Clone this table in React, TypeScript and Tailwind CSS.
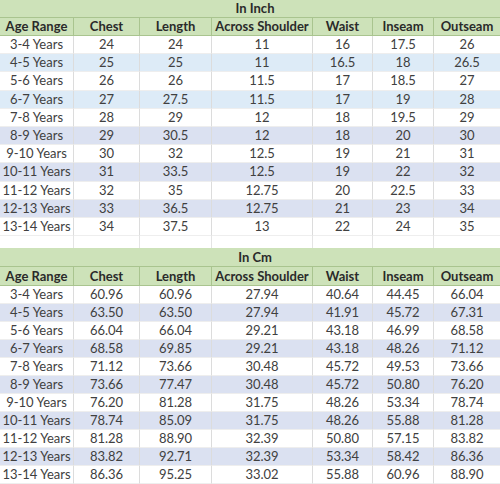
import React from "react";

const headers = ["Age Range", "Chest", "Length", "Across Shoulder", "Waist", "Inseam", "Outseam"];

const ages = [
  "3-4 Years",
  "4-5 Years",
  "5-6 Years",
  "6-7 Years",
  "7-8 Years",
  "8-9 Years",
  "9-10 Years",
  "10-11 Years",
  "11-12 Years",
  "12-13 Years",
  "13-14 Years",
];

const inchRows = [
  ["24", "24", "11", "16", "17.5", "26"],
  ["25", "25", "11", "16.5", "18", "26.5"],
  ["26", "26", "11.5", "17", "18.5", "27"],
  ["27", "27.5", "11.5", "17", "19", "28"],
  ["28", "29", "12", "18", "19.5", "29"],
  ["29", "30.5", "12", "18", "20", "30"],
  ["30", "32", "12.5", "19", "21", "31"],
  ["31", "33.5", "12.5", "19", "22", "32"],
  ["32", "35", "12.75", "20", "22.5", "33"],
  ["33", "36.5", "12.75", "21", "23", "34"],
  ["34", "37.5", "13", "22", "24", "35"],
];

const cmRows = [
  ["60.96", "60.96", "27.94", "40.64", "44.45", "66.04"],
  ["63.50", "63.50", "27.94", "41.91", "45.72", "67.31"],
  ["66.04", "66.04", "29.21", "43.18", "46.99", "68.58"],
  ["68.58", "69.85", "29.21", "43.18", "48.26", "71.12"],
  ["71.12", "73.66", "30.48", "45.72", "49.53", "73.66"],
  ["73.66", "77.47", "30.48", "45.72", "50.80", "76.20"],
  ["76.20", "81.28", "31.75", "48.26", "53.34", "78.74"],
  ["78.74", "85.09", "31.75", "48.26", "55.88", "81.28"],
  ["81.28", "88.90", "32.39", "50.80", "57.15", "83.82"],
  ["83.82", "92.71", "32.39", "53.34", "58.42", "86.36"],
  ["86.36", "95.25", "33.02", "55.88", "60.96", "88.90"],
];

const cols = "grid grid-cols-[74px_66px_72px_101px_60px_61px_66px]";

// stripe colour per row index (inch table mixes blue and lavender)
const inchStripe = ["", "bg-[#ddebf7]", "", "bg-[#ddebf7]", "", "bg-[#dbe1f1]", "", "bg-[#dbe1f1]", "", "bg-[#dbe1f1]", ""];
const cmStripe = ["", "bg-[#dbe1f1]", "", "bg-[#dbe1f1]", "", "bg-[#dbe1f1]", "", "bg-[#dbe1f1]", "", "bg-[#dbe1f1]", ""];

function SizeTable({
  title,
  rows,
  stripes,
  headH,
  rowH,
}: {
  title: string;
  rows: string[][];
  stripes: string[];
  headH: string;
  rowH: string;
}) {
  return (
    <div>
      {/* Title */}
      <div className={`flex ${headH} items-center justify-center border-b border-[#a9c48f] bg-[#cde2b9] pl-[10px] font-bold text-[#2a2a2a]`}>
        {title}
      </div>

      {/* Header */}
      <div className={`${cols} ${headH} bg-[#cde2b9] font-bold text-[#2a2a2a]`}>
        {headers.map((h, i) => (
          <div
            key={h}
            className={`flex items-center justify-center border-b border-[#a9c48f] ${i < 6 ? "border-r" : ""}`}
          >
            {h}
          </div>
        ))}
      </div>

      {/* Rows */}
      {rows.map((r, idx) => (
        <div key={ages[idx]} className={`${cols} ${rowH} text-[#404040] ${stripes[idx] || "bg-white"}`}>
          {[ages[idx], ...r].map((v, i) => (
            <div
              key={i}
              className={`flex items-center justify-center border-b border-[#eeeeee] ${i < 6 ? "border-r border-r-[#dcdcdc]" : ""}`}
            >
              {v}
            </div>
          ))}
        </div>
      ))}
    </div>
  );
}

export default function App() {
  return (
    <div className="h-[484px] w-[500px] overflow-hidden bg-white text-[13px] leading-none" style={{ fontFamily: "Lato, 'Open Sans', sans-serif" }}>
      <SizeTable title="In Inch" rows={inchRows} stripes={inchStripe} headH="h-[18px]" rowH="h-[18.2px]" />

      {/* spacer row */}
      <div className={`${cols} h-[12px] bg-white`}>
        {headers.map((h, i) => (
          <div key={h} className={i < 6 ? "border-r border-[#e4e4e4]" : ""} />
        ))}
      </div>

      <SizeTable title="In Cm" rows={cmRows} stripes={cmStripe} headH="h-[19px]" rowH="h-[18px]" />
    </div>
  );
}
